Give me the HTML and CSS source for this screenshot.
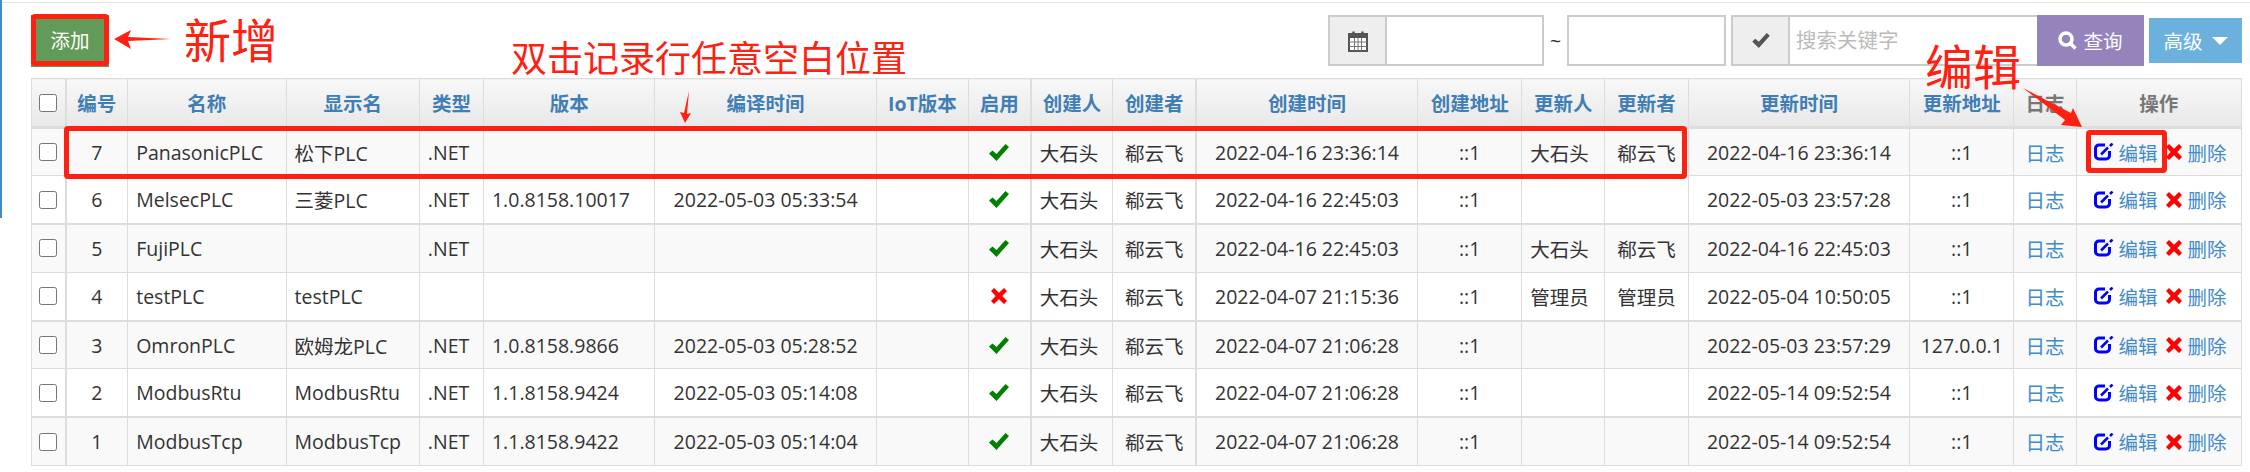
FILE: index.html

```html
<!DOCTYPE html>
<html lang="en">
<head>
    <meta charset="UTF-8">
    <title>Title</title>
    <link rel="stylesheet" href="styles.css">
</head>
<body>
<svg class="sprite" xmlns="http://www.w3.org/2000/svg">
    <symbol id="i-ok" viewBox="0 0 20 17"><path d="M0 9.5 3.5 6.5 7.5 10 16.500 0 20 3 7.500 17z"/></symbol>
    <symbol id="i-no" viewBox="0 0 16 16"><path d="M3 0 8 4.700 13 0 16 3 11.300 8 16 13 13 16 8 11.300 3 16 0 13 4.700 8 0 3z"/></symbol>
    <symbol id="i-edit" viewBox="0 0 20 18">
        <path d="M11 2H5A3.500 3.500 0 0 0 1.500 5.500v7A3.500 3.500 0 0 0 5 16h7a3.500 3.500 0 0 0 3.500-3.500V8" fill="none" stroke="currentColor" stroke-width="3"/>
        <path d="M7 11.500 14 4.500" fill="none" stroke="currentColor" stroke-width="2.500"/>
        <path d="M16 3 18.500 .5" fill="none" stroke="currentColor" stroke-width="2.500"/>
    </symbol>
</svg>

<div class="top-line"></div>
<div class="side-line"></div>

<div class="toolbar">
    <a href="javascript:;" class="btn-add">添加</a>
    <div class="filters">
        <span class="addon">
            <svg width="20" height="22" viewBox="0 0 20 22">
                <path d="M1 4h18v17H1z" fill="#fff" stroke="#555" stroke-width="2"/>
                <path d="M1 4h18v4H1z" fill="#555"/>
                <path d="M1 12h18M1 16.500h18M6.500 8v13M10 8v13M13.500 8v13" stroke="#777" stroke-width="1" fill="none"/>
                <path d="M5.500 1.500v4M14.500 1.500v4" stroke="#555" stroke-width="2.500" fill="none"/>
            </svg>
        </span>
        <input type="text" class="field date-first">
        <span class="tilde">~</span>
        <input type="text" class="field date-last">
        <span class="addon search-addon">
            <svg width="18" height="15" viewBox="0 0 20 17"><use href="#i-ok" fill="#555"/></svg>
        </span>
        <input type="text" class="field keyword" placeholder="搜索关键字">
        <a href="javascript:;" class="btn-search">
            <svg width="19" height="19" viewBox="0 0 19 19"><circle cx="8" cy="8" r="6" fill="none" stroke="#fff" stroke-width="3.500"/><path d="M12 12l5.500 5.500" stroke="#fff" stroke-width="3.500"/></svg>
            查询
        </a>
        <a href="javascript:;" class="btn-more">高级<i class="caret"></i></a>
    </div>
</div>

<table class="grid">
    <colgroup>
        <col class="c-check"><col class="c-id"><col class="c-name"><col class="c-show"><col class="c-type">
        <col class="c-ver"><col class="c-time"><col class="c-iot"><col class="c-on"><col class="c-user">
        <col class="c-user2"><col class="c-time"><col class="c-addr"><col class="c-user2"><col class="c-user2">
        <col class="c-time"><col class="c-addr"><col class="c-log"><col class="c-ops">
    </colgroup>
    <thead>
    <tr>
        <th><input type="checkbox" class="tick"></th>
        <th>编号</th><th>名称</th><th>显示名</th><th>类型</th><th>版本</th><th>编译时间</th><th>IoT版本</th><th>启用</th>
        <th>创建人</th><th>创建者</th><th>创建时间</th><th>创建地址</th><th>更新人</th><th>更新者</th><th>更新时间</th><th>更新地址</th>
        <th class="plain">日志</th><th class="plain">操作</th>
    </tr>
    </thead>
    <tbody>
    <tr>
        <td><input type="checkbox" class="tick"></td>
        <td class="mid">7</td><td>PanasonicPLC</td><td>松下PLC</td><td>.NET</td><td></td><td class="mid"></td><td></td>
        <td class="mid"><svg class="flag ok"><use href="#i-ok"/></svg></td>
        <td>大石头</td><td class="mid">郗云飞</td><td class="mid">2022-04-16 23:36:14</td><td class="mid">::1</td>
        <td>大石头</td><td class="mid">郗云飞</td><td class="mid">2022-04-16 23:36:14</td><td class="mid">::1</td>
        <td class="mid"><a href="javascript:;">日志</a></td>
        <td><div class="ops"><svg class="ico-edit"><use href="#i-edit"/></svg><a href="javascript:;">编辑</a><svg class="ico-del"><use href="#i-no"/></svg><a href="javascript:;">删除</a></div></td>
    </tr>
    <tr>
        <td><input type="checkbox" class="tick"></td>
        <td class="mid">6</td><td>MelsecPLC</td><td>三菱PLC</td><td>.NET</td><td>1.0.8158.10017</td><td class="mid">2022-05-03 05:33:54</td><td></td>
        <td class="mid"><svg class="flag ok"><use href="#i-ok"/></svg></td>
        <td>大石头</td><td class="mid">郗云飞</td><td class="mid">2022-04-16 22:45:03</td><td class="mid">::1</td>
        <td></td><td class="mid"></td><td class="mid">2022-05-03 23:57:28</td><td class="mid">::1</td>
        <td class="mid"><a href="javascript:;">日志</a></td>
        <td><div class="ops"><svg class="ico-edit"><use href="#i-edit"/></svg><a href="javascript:;">编辑</a><svg class="ico-del"><use href="#i-no"/></svg><a href="javascript:;">删除</a></div></td>
    </tr>
    <tr>
        <td><input type="checkbox" class="tick"></td>
        <td class="mid">5</td><td>FujiPLC</td><td></td><td>.NET</td><td></td><td class="mid"></td><td></td>
        <td class="mid"><svg class="flag ok"><use href="#i-ok"/></svg></td>
        <td>大石头</td><td class="mid">郗云飞</td><td class="mid">2022-04-16 22:45:03</td><td class="mid">::1</td>
        <td>大石头</td><td class="mid">郗云飞</td><td class="mid">2022-04-16 22:45:03</td><td class="mid">::1</td>
        <td class="mid"><a href="javascript:;">日志</a></td>
        <td><div class="ops"><svg class="ico-edit"><use href="#i-edit"/></svg><a href="javascript:;">编辑</a><svg class="ico-del"><use href="#i-no"/></svg><a href="javascript:;">删除</a></div></td>
    </tr>
    <tr>
        <td><input type="checkbox" class="tick"></td>
        <td class="mid">4</td><td>testPLC</td><td>testPLC</td><td></td><td></td><td class="mid"></td><td></td>
        <td class="mid"><svg class="flag no"><use href="#i-no"/></svg></td>
        <td>大石头</td><td class="mid">郗云飞</td><td class="mid">2022-04-07 21:15:36</td><td class="mid">::1</td>
        <td>管理员</td><td class="mid">管理员</td><td class="mid">2022-05-04 10:50:05</td><td class="mid">::1</td>
        <td class="mid"><a href="javascript:;">日志</a></td>
        <td><div class="ops"><svg class="ico-edit"><use href="#i-edit"/></svg><a href="javascript:;">编辑</a><svg class="ico-del"><use href="#i-no"/></svg><a href="javascript:;">删除</a></div></td>
    </tr>
    <tr>
        <td><input type="checkbox" class="tick"></td>
        <td class="mid">3</td><td>OmronPLC</td><td>欧姆龙PLC</td><td>.NET</td><td>1.0.8158.9866</td><td class="mid">2022-05-03 05:28:52</td><td></td>
        <td class="mid"><svg class="flag ok"><use href="#i-ok"/></svg></td>
        <td>大石头</td><td class="mid">郗云飞</td><td class="mid">2022-04-07 21:06:28</td><td class="mid">::1</td>
        <td></td><td class="mid"></td><td class="mid">2022-05-03 23:57:29</td><td class="mid">127.0.0.1</td>
        <td class="mid"><a href="javascript:;">日志</a></td>
        <td><div class="ops"><svg class="ico-edit"><use href="#i-edit"/></svg><a href="javascript:;">编辑</a><svg class="ico-del"><use href="#i-no"/></svg><a href="javascript:;">删除</a></div></td>
    </tr>
    <tr>
        <td><input type="checkbox" class="tick"></td>
        <td class="mid">2</td><td>ModbusRtu</td><td>ModbusRtu</td><td>.NET</td><td>1.1.8158.9424</td><td class="mid">2022-05-03 05:14:08</td><td></td>
        <td class="mid"><svg class="flag ok"><use href="#i-ok"/></svg></td>
        <td>大石头</td><td class="mid">郗云飞</td><td class="mid">2022-04-07 21:06:28</td><td class="mid">::1</td>
        <td></td><td class="mid"></td><td class="mid">2022-05-14 09:52:54</td><td class="mid">::1</td>
        <td class="mid"><a href="javascript:;">日志</a></td>
        <td><div class="ops"><svg class="ico-edit"><use href="#i-edit"/></svg><a href="javascript:;">编辑</a><svg class="ico-del"><use href="#i-no"/></svg><a href="javascript:;">删除</a></div></td>
    </tr>
    <tr>
        <td><input type="checkbox" class="tick"></td>
        <td class="mid">1</td><td>ModbusTcp</td><td>ModbusTcp</td><td>.NET</td><td>1.1.8158.9422</td><td class="mid">2022-05-03 05:14:04</td><td></td>
        <td class="mid"><svg class="flag ok"><use href="#i-ok"/></svg></td>
        <td>大石头</td><td class="mid">郗云飞</td><td class="mid">2022-04-07 21:06:28</td><td class="mid">::1</td>
        <td></td><td class="mid"></td><td class="mid">2022-05-14 09:52:54</td><td class="mid">::1</td>
        <td class="mid"><a href="javascript:;">日志</a></td>
        <td><div class="ops"><svg class="ico-edit"><use href="#i-edit"/></svg><a href="javascript:;">编辑</a><svg class="ico-del"><use href="#i-no"/></svg><a href="javascript:;">删除</a></div></td>
    </tr>
    </tbody>
</table>

<!-- red notes drawn over the screenshot -->
<div class="mark mark-add"></div>
<div class="mark mark-row"></div>
<div class="mark mark-edit"></div>
<div class="note note-add">新增</div>
<div class="note note-row">双击记录行任意空白位置</div>
<div class="note note-edit">编辑</div>
<svg class="arrows" width="2250" height="472" viewBox="0 0 2250 472">
    <path d="M114 39 131 30 128 37 171 39 128 41 131 49z"/>
    <path d="M685 123 680 112 684 113 689 91 687 114 691 113z"/>
    <path d="M2082 127 2061 125 2065 120 2023 88 2071 113 2073 108z"/>
</svg>
</body>
</html>
```

FILE: styles.css

```css
* {
    margin: 0;
    padding: 0;
    box-sizing: border-box;
}

html, body {
    width: 2250px;
    height: 472px;
    overflow: hidden;
    background: #fff;
}

body {
    position: relative;
    font-family: "Open Sans", "Noto Sans CJK SC", sans-serif;
    font-size: 19.5px;
    color: #333;
}

a {
    color: #428bca;
    text-decoration: none;
}

.sprite {
    display: none;
}

.top-line {
    height: 3px;
    border-bottom: 1px solid #e5e5e5;
}

.side-line {
    position: absolute;
    left: 0;
    top: 0;
    width: 2px;
    height: 218px;
    background: #428bca;
}

.toolbar {
    display: flex;
    justify-content: space-between;
    align-items: center;
    height: 75px;
    padding: 0 8px 0 31px;
}

.btn-add {
    width: 78px;
    height: 52px;
    line-height: 52px;
    text-align: center;
    color: #fff;
    background: #629b58;
}

.filters {
    display: flex;
    align-items: center;
}

.addon {
    display: flex;
    align-items: center;
    justify-content: center;
    width: 58px;
    height: 51px;
    background: #eee;
    border: 2px solid #ccc;
    border-right-width: 1px;
}

.field {
    height: 51px;
    border: 2px solid #ccc;
    border-left-width: 1px;
    font: inherit;
    padding: 0 13px;
    outline: none;
}

.field::placeholder {
    color: #bbb;
    font-size: 20.500px;
}

.date-first {
    width: 158px;
}

.tilde {
    width: 23px;
    text-align: center;
}

.date-last {
    width: 159px;
    border-left-width: 2px;
}

.search-addon {
    margin-left: 5px;
}

.keyword {
    width: 248px;
    padding: 0 6px;
    border-right: 0;
}

.btn-search {
    display: flex;
    align-items: center;
    justify-content: center;
    gap: 6px;
    width: 107px;
    height: 51px;
    color: #fff;
    background: #9584bb;
}

.btn-more {
    display: flex;
    align-items: center;
    justify-content: center;
    gap: 9px;
    width: 93px;
    height: 45px;
    margin-left: 5px;
    color: #fff;
    background: #6cb0de;
}

.caret {
    width: 0;
    height: 0;
    border-top: 8px solid #fff;
    border-left: 8px solid transparent;
    border-right: 8px solid transparent;
}

.grid {
    width: 2211px;
    margin-left: 31px;
    border-collapse: collapse;
    table-layout: fixed;
}

.c-check { width: 34px; }
.c-id { width: 62px; }
.c-name { width: 158px; }
.c-show { width: 133px; }
.c-type { width: 64px; }
.c-ver { width: 171px; }
.c-time { width: 221px; }
.c-iot { width: 92px; }
.c-on { width: 62px; }
.c-user { width: 82px; }
.c-user2 { width: 83px; }
.c-addr { width: 104px; }
.c-log { width: 62px; }
.c-ops { width: 165px; }

.grid th, .grid td {
    border: 1px solid #ddd;
    vertical-align: middle;
    white-space: nowrap;
    overflow: hidden;
}

.grid th {
    height: 49px;
    border-bottom: 3px solid #ddd;
    color: #3f7eb6;
    font-weight: bold;
    text-align: center;
    background: linear-gradient(#f8f8f8, #e8e8e8);
}

.grid th.plain {
    color: #777;
}

.grid td {
    height: 48.300px;
    padding: 0 8px;
}

.grid tbody tr:nth-child(odd) td {
    background: #f9f9f9;
}

.grid tbody tr:nth-child(even) td {
    border-bottom-width: 2px;
}

.grid th:first-child, .grid td:first-child,
.grid th:nth-child(9), .grid td:nth-child(9),
.grid th:nth-child(11), .grid td:nth-child(11) {
    border-right-width: 2px;
}

.grid th:first-child, .grid td:first-child {
    padding: 0;
    text-align: center;
}

.grid td.mid {
    text-align: center;
}

.tick {
    display: block;
    width: 18px;
    height: 18px;
    margin: 0 auto;
}

.flag {
    display: block;
    margin: 0 auto;
    width: 20px;
    height: 17px;
}

.flag.ok {
    fill: #008000;
}

.flag.no {
    width: 16px;
    height: 16px;
    fill: #f00;
}

.ops {
    display: flex;
    align-items: center;
    padding-left: 9px;
}

.ico-edit {
    width: 20px;
    height: 18px;
    margin-right: 5px;
    color: #00f;
}

.ico-del {
    width: 16px;
    height: 16px;
    margin: 0 6px 0 8px;
    fill: #f00;
}

.mark {
    position: absolute;
    border: 5px solid #fe2010;
    border-radius: 4px;
}

.mark-add {
    left: 31px;
    top: 14px;
    width: 78px;
    height: 52px;
}

.mark-row {
    left: 64px;
    top: 126px;
    width: 1623px;
    height: 53px;
}

.mark-edit {
    left: 2086px;
    top: 130px;
    width: 81px;
    height: 43px;
}

.note {
    position: absolute;
    color: #fe2010;
    line-height: 1;
    white-space: nowrap;
}

.note-add {
    left: 184px;
    top: 17px;
    font-size: 47px;
}

.note-row {
    left: 511px;
    top: 41px;
    font-size: 36px;
}

.note-edit {
    left: 1925px;
    top: 43px;
    font-size: 48px;
}

.arrows {
    position: absolute;
    left: 0;
    top: 0;
    fill: #fe2010;
}
```
